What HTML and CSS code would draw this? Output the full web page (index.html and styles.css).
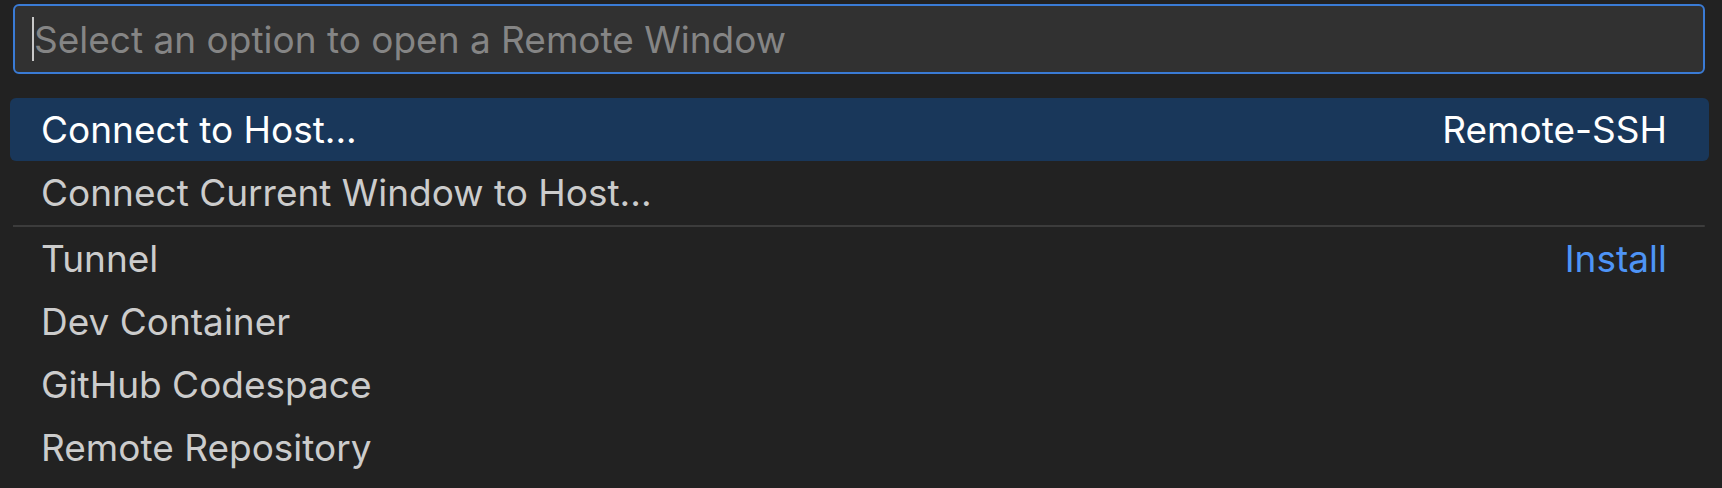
FILE: index.html
```html
<!DOCTYPE html>
<html>
<head>
  <title>Remote Window</title>
  <link rel="stylesheet" href="styles.css">
</head>
<body>
  <div class="quick-input">
    <div class="quick-input-box">
      <span class="caret"></span>
      <span class="placeholder">Select an option to open a Remote Window</span>
    </div>

    <div class="quick-list">
      <div class="quick-row focused">
        <span class="label">Connect to Host...</span>
        <span class="detail">Remote-SSH</span>
      </div>
      <div class="quick-row">
        <span class="label">Connect Current Window to Host...</span>
      </div>
      <div class="quick-separator"></div>
      <div class="quick-row">
        <span class="label">Tunnel</span>
        <span class="detail link">Install</span>
      </div>
      <div class="quick-row">
        <span class="label">Dev Container</span>
      </div>
      <div class="quick-row">
        <span class="label">GitHub Codespace</span>
      </div>
      <div class="quick-row">
        <span class="label">Remote Repository</span>
      </div>
    </div>
  </div>
</body>
</html>
```

FILE: styles.css
```css
:root {
  --bg: #222222;
  --input-bg: #313131;
  --input-border: #3a7bd5;
  --focus-bg: #19375a;
  --text: #cccccc;
  --text-focus: #ffffff;
  --placeholder: #858585;
  --link: #4e94f6;
  --separator: #3c3c3c;
}

html, body {
  margin: 0;
  padding: 0;
  background: var(--bg);
}

body {
  font-family: Inter, "Liberation Sans", sans-serif;
  font-size: 37px;
  color: var(--text);
  height: 488px;
  overflow: hidden;
}

.quick-input {
  padding: 4px 13px 0 10px;
}

.quick-input-box {
  display: flex;
  align-items: center;
  height: 66px;
  margin: 0 4px 24px 3px;
  padding: 0 17px;
  background: var(--input-bg);
  border: 2px solid var(--input-border);
  border-radius: 6px;
}

.caret {
  width: 2px;
  height: 44px;
  background: #c8c8c8;
}

.placeholder {
  color: var(--placeholder);
}

.quick-row {
  display: flex;
  align-items: center;
  justify-content: space-between;
  height: 63px;
  padding: 0 42px 0 31px;
  border-radius: 6px;
}

.quick-row.focused {
  background: var(--focus-bg);
  color: var(--text-focus);
}

.detail.link {
  color: var(--link);
}

.quick-separator {
  height: 2px;
  margin: 1px 4px 0 3px;
  background: var(--separator);
  border-radius: 0 2px 2px 0;
}
```
